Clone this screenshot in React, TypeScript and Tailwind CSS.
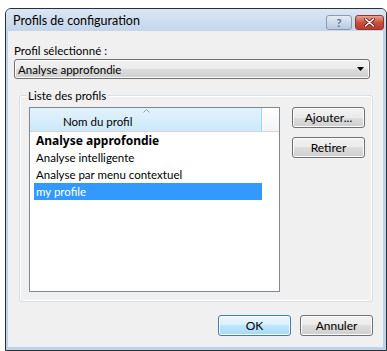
import React from "react"

const font = { fontFamily: 'Lato, "Noto Sans", sans-serif' }

function VistaButton({ label, isDefault }: { label: string; isDefault?: boolean }) {
    return (
        <div
            className={
                "flex h-[21px] w-[73px] items-center justify-center rounded-[3px] border text-[12px] leading-[15px] text-black shadow-[inset_0_0_0_1px_#fcfcfc] " +
                (isDefault
                    ? "border-[#3c7fb1] bg-[linear-gradient(to_bottom,#eaf6fd_0%,#d9f0fc_50%,#bee6fd_50%,#a7d9f5_100%)]"
                    : "border-[#707070] bg-[linear-gradient(to_bottom,#f2f2f2_0%,#ebebeb_50%,#dddddd_50%,#cfcfcf_100%)]")
            }
        >
            {label}
        </div>
    )
}

const profiles = [
    { name: "Analyse approfondie", bold: true },
    { name: "Analyse intelligente" },
    { name: "Analyse par menu contextuel" },
    { name: "my profile", selected: true },
]

export default function App() {
    return (
        <div className="h-[351px] w-[387px] bg-white pl-[5px] pt-[8px]" style={font}>
            <div className="flex h-[343px] w-[382px] flex-col overflow-hidden rounded-t-[6px] border border-[#2a3038] bg-[#c5d6eb]">
                {/* title bar */}
                <div className="flex h-[22px] shrink-0 items-center justify-between bg-[linear-gradient(to_bottom,#dbe6f3,#c4d5ea)] pl-[7px] pr-[2px]">
                    <span className="text-[12.5px] leading-[15px] text-black">Profils de configuration</span>
                    <div className="mt-[4px] flex gap-[3px]">
                        <div className="flex h-[15px] w-[26px] items-center justify-center rounded-[3px] border border-[#8a9bb2] bg-[linear-gradient(to_bottom,#e4ecf6,#b7c8de)] text-[11px] font-bold leading-none text-[#5a6d87]">
                            ?
                        </div>
                        <div className="flex h-[15px] w-[29px] items-center justify-center rounded-[3px] border border-[#8c3a30] bg-[linear-gradient(to_bottom,#e8a58f,#c9503d_50%,#c0392b)]">
                            <svg width="11" height="9" viewBox="0 0 11 9">
                                <path d="M1.5 1 L9.5 8 M9.5 1 L1.5 8" stroke="#5a1a12" strokeWidth="3" strokeLinecap="round" />
                                <path d="M1.5 1 L9.5 8 M9.5 1 L1.5 8" stroke="#ffffff" strokeWidth="1.6" strokeLinecap="round" />
                            </svg>
                        </div>
                    </div>
                </div>

                {/* client area */}
                <div className="flex flex-1 flex-col border-b-[3px] border-l-[2px] border-r-[3px] border-[#bcd3ec] bg-[#f0f0f0] pl-[6px] pt-[12px] text-[11.5px] leading-[15px] text-black">
                    <div className="h-[15px]">Profil sélectionné :</div>

                    <div className="mt-[1px] flex h-[20px] w-[356px] items-center justify-between rounded-[3px] border border-[#707070] bg-[linear-gradient(to_bottom,#f2f2f2_0%,#ebebeb_50%,#dddddd_50%,#cfcfcf_100%)] pl-[3px] pr-[5px] shadow-[inset_0_0_0_1px_#fcfcfc]">
                        <span>Analyse approfondie</span>
                        <svg width="7" height="4" viewBox="0 0 7 4">
                            <path d="M0 0 H7 L3.5 4 Z" fill="#000" />
                        </svg>
                    </div>

                    {/* group box */}
                    <div className="relative ml-[5px] mt-[16px] flex h-[207px] w-[354px] rounded-[3px] border border-[#d5dfe5] pl-[9px] pt-[11px] shadow-[inset_0_0_0_1px_#ffffff]">
                        <span className="absolute left-[6px] top-[-8px] bg-[#f0f0f0] px-[2px]">Liste des profils</span>

                        <div className="flex h-[185px] w-[251px] flex-col border border-[#828790] bg-white">
                            <div className="flex h-[24px] shrink-0 border-b border-[#d5d5d5] bg-[linear-gradient(to_bottom,#ffffff,#f3f4f6)]">
                                <div className="relative h-full w-[232px] border-r border-[#96d9f9] bg-[linear-gradient(to_bottom,#e3f3fd,#cde8f9)] pl-[33px] pt-[6px]">
                                    Nom du profil
                                    <svg className="absolute left-[113px] top-[1px]" width="7" height="4" viewBox="0 0 7 4">
                                        <path d="M0.5 3.5 L3.5 0.5 L6.5 3.5" fill="none" stroke="#8fa3b8" strokeWidth="1" />
                                    </svg>
                                </div>
                            </div>
                            {profiles.map((p) => (
                                <div
                                    key={p.name}
                                    className={
                                        "ml-[4px] h-[17px] w-[228px] pl-[2px] leading-[17px] " +
                                        (p.selected ? "bg-[#3399ff] text-white " : "") +
                                        (p.bold ? "font-['Noto_Sans'] text-[12px] font-bold" : "")
                                    }
                                >
                                    {p.name}
                                </div>
                            ))}
                        </div>

                        <div className="ml-[12px] flex flex-col gap-[9px]">
                            <VistaButton label="Ajouter..." />
                            <VistaButton label="Retirer" />
                        </div>
                    </div>

                    {/* dialog buttons */}
                    <div className="mt-[13px] flex justify-end gap-[9px] pr-[10px]">
                        <VistaButton label="OK" isDefault />
                        <VistaButton label="Annuler" />
                    </div>
                </div>
            </div>
        </div>
    )
}
